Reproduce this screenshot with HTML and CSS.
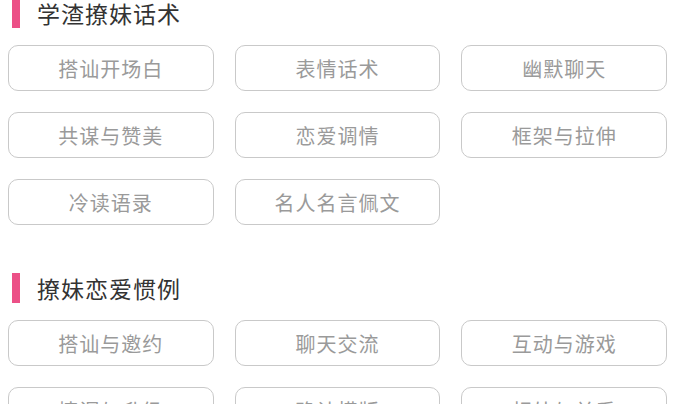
FILE: index.html
```html
<!DOCTYPE html>
<html lang="zh">
<head>
<meta charset="utf-8">
<link rel="stylesheet" href="styles.css">
</head>
<body>
<div class="page">
  <section class="section first">
    <h2 class="title"><span class="bar"></span><span class="title-text">学渣撩妹话术</span></h2>
    <div class="grid">
      <div class="btn">搭讪开场白</div>
      <div class="btn">表情话术</div>
      <div class="btn">幽默聊天</div>
      <div class="btn">共谋与赞美</div>
      <div class="btn">恋爱调情</div>
      <div class="btn">框架与拉伸</div>
      <div class="btn">冷读语录</div>
      <div class="btn">名人名言佩文</div>
    </div>
  </section>
  <section class="section second">
    <h2 class="title"><span class="bar"></span><span class="title-text">撩妹恋爱惯例</span></h2>
    <div class="grid">
      <div class="btn">搭讪与邀约</div>
      <div class="btn">聊天交流</div>
      <div class="btn">互动与游戏</div>
      <div class="btn">情调与升级</div>
      <div class="btn">确认模版</div>
      <div class="btn">相处与关系</div>
    </div>
  </section>
</div>
</body>
</html>
```
FILE: styles.css
```css
html, body {
  margin: 0;
  padding: 0;
  background: #ffffff;
}
body {
  font-family: "Noto Sans CJK SC", "Noto Sans", sans-serif;
  overflow: hidden;
  height: 404px;
}
.page {
  padding: 0 8px 0 8px;
  width: 659px;
}
.section.first {
  margin-top: -2px;
}
.section.second {
  margin-top: 48px;
}
.title {
  display: flex;
  align-items: center;
  height: 30px;
  margin: 0 0 17px 0;
  font-weight: normal;
}
.bar {
  width: 8px;
  height: 30px;
  background: #ec5087;
  margin-left: 4px;
  margin-right: 17px;
  flex: none;
}
.title-text {
  font-size: 23px;
  color: #333333;
  line-height: 30px;
  letter-spacing: 1px;
}
.grid {
  display: grid;
  grid-template-columns: repeat(3, 1fr);
  column-gap: 21px;
  row-gap: 21px;
}
.btn {
  height: 46px;
  box-sizing: border-box;
  border: 1.5px solid #c9c9c9;
  border-radius: 10px;
  display: flex;
  align-items: center;
  justify-content: center;
  font-size: 20px;
  color: #9a9a9a;
  letter-spacing: 1px;
}
```
